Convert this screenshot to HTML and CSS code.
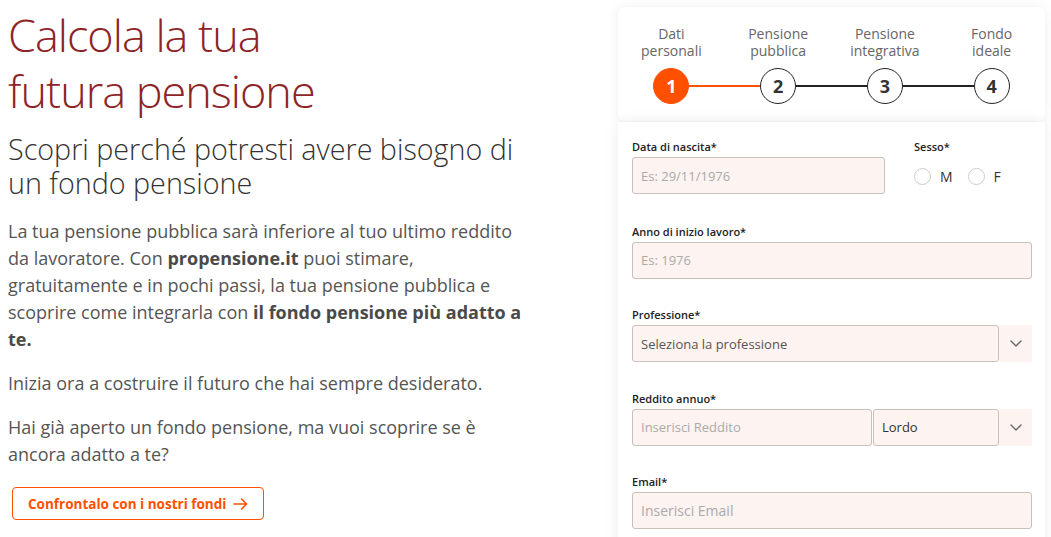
FILE: index.html
```html
<!DOCTYPE html>
<html lang="it">
<head>
<meta charset="utf-8">
<title>Calcola la tua futura pensione</title>
<link rel="stylesheet" href="styles.css">
</head>
<body>
<div class="page">
  <section class="intro">
    <h1 class="title">Calcola la tua<br>futura pensione</h1>
    <h2 class="subtitle">Scopri perché potresti avere bisogno di un fondo pensione</h2>
    <p class="text">La tua pensione pubblica sarà inferiore al tuo ultimo reddito da lavoratore. Con <strong>propensione.it</strong> puoi stimare,<br>gratuitamente e in pochi passi, la tua pensione pubblica e scoprire come integrarla con <strong>il fondo pensione più adatto a te.</strong></p>
    <p class="text">Inizia ora a costruire il futuro che hai sempre desiderato.</p>
    <p class="text">Hai già aperto un fondo pensione, ma vuoi scoprire se è ancora adatto a te?</p>
    <a class="cta" href="#">Confrontalo con i nostri fondi
      <svg class="cta-icon" width="15" height="14" viewBox="0 0 15 14" fill="none" stroke="currentColor" stroke-width="1.6" stroke-linecap="round" stroke-linejoin="round"><path d="M1 7h12.5M8.5 2l5 5-5 5"/></svg>
    </a>
  </section>

  <aside class="wizard">
    <div class="steps">
      <div class="step-labels">
        <span>Dati<br>personali</span>
        <span>Pensione<br>pubblica</span>
        <span>Pensione<br>integrativa</span>
        <span>Fondo<br>ideale</span>
      </div>
      <div class="step-track">
        <span class="dot dot-active">1</span>
        <span class="bar bar-done"></span>
        <span class="dot">2</span>
        <span class="bar"></span>
        <span class="dot">3</span>
        <span class="bar"></span>
        <span class="dot">4</span>
      </div>
    </div>

    <form class="form">
      <div class="row-split">
        <div class="field">
          <label class="label">Data di nascita*</label>
          <div class="control placeholder">Es: 29/11/1976</div>
        </div>
        <div class="field">
          <label class="label">Sesso*</label>
          <div class="radios">
            <span class="radio"></span><span class="radio-text">M</span>
            <span class="radio"></span><span class="radio-text">F</span>
          </div>
        </div>
      </div>

      <div class="field">
        <label class="label">Anno di inizio lavoro*</label>
        <div class="control placeholder">Es: 1976</div>
      </div>

      <div class="field">
        <label class="label">Professione*</label>
        <div class="combo">
          <div class="control grow">Seleziona la professione</div>
          <span class="arrow"><svg width="12" height="7" viewBox="0 0 12 7" fill="none" stroke="#666" stroke-width="1.4" stroke-linecap="round" stroke-linejoin="round"><path d="M1 1l5 5 5-5"/></svg></span>
        </div>
      </div>

      <div class="field">
        <label class="label">Reddito annuo*</label>
        <div class="combo">
          <div class="control placeholder grow">Inserisci Reddito</div>
          <div class="control select-small">Lordo</div>
          <span class="arrow"><svg width="12" height="7" viewBox="0 0 12 7" fill="none" stroke="#666" stroke-width="1.4" stroke-linecap="round" stroke-linejoin="round"><path d="M1 1l5 5 5-5"/></svg></span>
        </div>
      </div>

      <div class="field">
        <label class="label">Email*</label>
        <div class="control placeholder email">Inserisci Email</div>
      </div>
    </form>
  </aside>
</div>
</body>
</html>
```

FILE: styles.css
```css
* { box-sizing: border-box; }

body {
  margin: 0;
  background: #fff;
  font-family: "Open Sans", "Liberation Sans", sans-serif;
}

.page {
  display: flex;
  justify-content: space-between;
  align-items: flex-start;
  padding: 7px 6px 0 8px;
}

.intro {
  width: 520px;
}

.title {
  margin: 0;
  font-weight: 300;
  font-size: 45px;
  line-height: 56px;
  color: #8e2428;
  letter-spacing: -1px;
}

.subtitle {
  margin: 13px 0 0;
  font-weight: 300;
  font-size: 28.7px;
  line-height: 34px;
  color: #333;
}

.text {
  margin: 18px 0 0;
  font-size: 18px;
  line-height: 27px;
  color: #555;
}

.text + .text {
  margin-top: 17px;
}

.text strong {
  font-weight: 700;
  color: #4a4a4a;
}

.cta {
  display: inline-flex;
  align-items: center;
  gap: 7px;
  margin: 19px 0 0 4px;
  height: 33px;
  padding: 0 15px;
  border: 1px solid #fe5000;
  border-radius: 4px;
  color: #fe5000;
  font-weight: 700;
  font-size: 13.5px;
  text-decoration: none;
}

.cta-icon {
  display: block;
}

.wizard {
  width: 427px;
}

.steps {
  background: #fff;
  border-radius: 6px;
  box-shadow: 0 0 12px rgba(0, 0, 0, 0.07);
  padding: 18px 0 17px;
}

.step-labels {
  display: grid;
  grid-template-columns: repeat(4, 1fr);
  text-align: center;
  font-size: 14px;
  line-height: 17px;
  color: #666;
}

.step-track {
  display: flex;
  align-items: center;
  padding: 0 calc(12.5% - 18px);
  margin-top: 9px;
}

.dot {
  flex: none;
  width: 36px;
  height: 36px;
  border: 1.5px solid #222;
  border-radius: 50%;
  display: flex;
  align-items: center;
  justify-content: center;
  font-weight: 700;
  font-size: 18px;
  color: #333;
  background: #fff;
}

.dot-active {
  background: #fe5000;
  border-color: #fe5000;
  color: #fff;
}

.bar {
  flex: 1;
  height: 1.5px;
  background: #222;
}

.bar-done {
  background: #fe5000;
}

.form {
  margin-top: 1px;
  background: #fff;
  box-shadow: 0 0 14px rgba(0, 0, 0, 0.08);
  padding: 17px 13px 40px 14px;
  display: flex;
  flex-direction: column;
  gap: 28.5px;
}

.row-split {
  display: grid;
  grid-template-columns: 253px 1fr;
  column-gap: 29px;
}

.label {
  display: block;
  font-size: 11px;
  line-height: 15px;
  font-weight: 600;
  color: #222;
  margin-bottom: 3px;
}

.control {
  height: 37px;
  border: 1px solid #cbbfbc;
  border-radius: 3px;
  background: #fdf3f0;
  font-size: 13px;
  padding: 0 8px;
  display: flex;
  align-items: center;
  color: #555;
  white-space: nowrap;
}

.placeholder {
  color: #aaa;
}

.email {
  font-size: 14px;
}

.radios {
  height: 38px;
  display: flex;
  align-items: center;
  font-size: 14px;
  color: #333;
}

.radio {
  width: 17px;
  height: 17px;
  border: 1px solid #ccc;
  border-radius: 50%;
  background: #fff;
}

.radio-text {
  margin: 0 15px 0 9px;
}

.combo {
  display: flex;
}

.grow {
  flex: 1;
}

.select-small {
  width: 126px;
  margin-left: 1px;
  color: #333;
}

.arrow {
  width: 33px;
  height: 37px;
  background: #fdf3f0;
  display: flex;
  align-items: center;
  justify-content: center;
}
```
